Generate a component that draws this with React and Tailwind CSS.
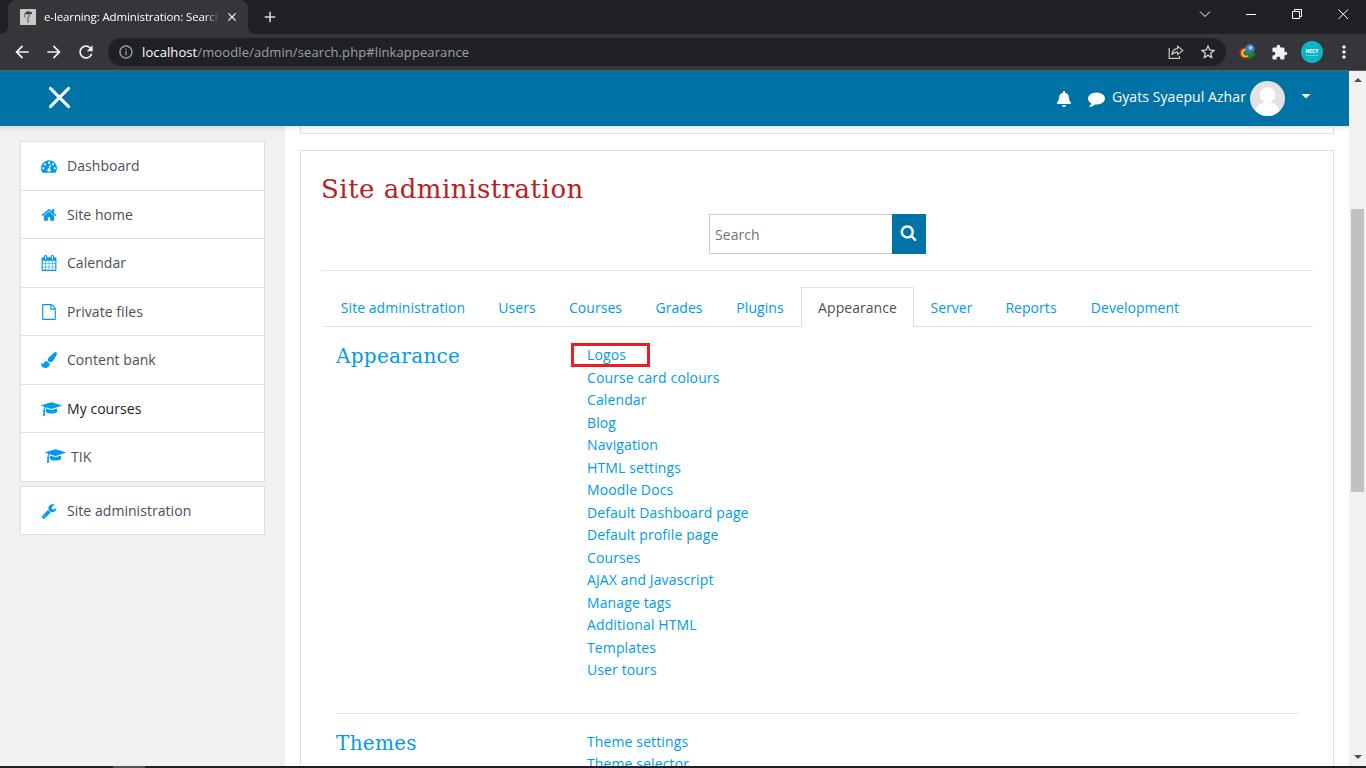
import { MdArrowBack, MdArrowForward, MdRefresh, MdInfoOutline, MdStarBorder, MdExtension, MdMoreVert, MdClose, MdAdd } from 'react-icons/md';
import { FaBell } from 'react-icons/fa';

const glyphs = {
  tachometer: 'M384 1152q0-53-37.5-90.5t-90.5-37.5-90.5 37.5-37.5 90.5 37.5 90.5 90.5 37.5 90.5-37.5 37.5-90.5zm192-448q0-53-37.5-90.5t-90.5-37.5-90.5 37.5-37.5 90.5 37.5 90.5 90.5 37.5 90.5-37.5 37.5-90.5zm428 481l101-382q6-26-7.5-48.5t-38.5-29.5-48 6.5-30 39.5l-101 382q-60 5-107 43.5t-63 98.5q-20 77 20 146t117 89 146-20 89-117q16-60-6-117t-72-91zm660-33q0-53-37.5-90.5t-90.5-37.5-90.5 37.5-37.5 90.5 37.5 90.5 90.5 37.5 90.5-37.5 37.5-90.5zm-640-640q0-53-37.5-90.5t-90.5-37.5-90.5 37.5-37.5 90.5 37.5 90.5 90.5 37.5 90.5-37.5 37.5-90.5zm448 192q0-53-37.5-90.5t-90.5-37.5-90.5 37.5-37.5 90.5 37.5 90.5 90.5 37.5 90.5-37.5 37.5-90.5zm320 448q0 261-141 483-19 29-54 29h-1402q-35 0-54-29-141-221-141-483 0-182 71-348t191-286 286-191 348-71 348 71 286 191 191 286 71 348z',
  home: 'M1472 992v480q0 26-19 45t-45 19h-384v-384h-256v384h-384q-26 0-45-19t-19-45v-480q0-1 .5-3t.5-3l575-474 575 474q1 2 1 6zm223-69l-62 74q-8 9-21 11h-3q-13 0-21-7l-692-577-692 577q-12 8-24 7-13-2-21-11l-62-74q-8-10-7-23.5t11-21.5l719-599q32-26 76-26t76 26l244 204v-195q0-14 9-23t23-9h192q14 0 23 9t9 23v408l219 182q10 8 11 21.5t-7 23.5z',
  calendar: 'M192 1664h288v-288h-288v288zm352 0h320v-288h-320v288zm-352-352h288v-320h-288v320zm352 0h320v-320h-320v320zm-352-384h288v-288h-288v288zm736 736h320v-288h-320v288zm-384-736h320v-288h-320v288zm768 736h288v-288h-288v288zm-384-352h320v-320h-320v320zm-352-864v-288q0-13-9.5-22.5t-22.5-9.5h-64q-13 0-22.5 9.5t-9.5 22.5v288q0 13 9.5 22.5t22.5 9.5h64q13 0 22.5-9.5t9.5-22.5zm736 864h288v-320h-288v320zm-384-384h320v-288h-320v288zm384 0h288v-288h-288v288zm32-480v-288q0-13-9.5-22.5t-22.5-9.5h-64q-13 0-22.5 9.5t-9.5 22.5v288q0 13 9.5 22.5t22.5 9.5h64q13 0 22.5-9.5t9.5-22.5zm384-64v1280q0 52-38 90t-90 38h-1408q-52 0-90-38t-38-90v-1280q0-52 38-90t90-38h128v-96q0-66 47-113t113-47h64q66 0 113 47t47 113v96h384v-96q0-66 47-113t113-47h64q66 0 113 47t47 113v96h128q52 0 90 38t38 90z',
  file: 'M1596 380q28 28 48 76t20 88v1152q0 40-28 68t-68 28h-1344q-40 0-68-28t-28-68v-1600q0-40 28-68t68-28h896q40 0 88 20t76 48zm-444-244v376h376q-10-29-22-41l-313-313q-12-12-41-22zm384 1528v-1024h-416q-40 0-68-28t-28-68v-416h-768v1536h1280z',
  brush: 'M1615 0q70 0 122.5 46.5t52.5 116.5q0 63-45 151-332 629-465 752-97 91-218 91-126 0-216.5-92.5t-90.5-219.5q0-128 92-212l638-579q59-54 130-54zm-909 1034q39 76 106.5 130t150.5 76l1 71q4 213-129.5 347t-348.5 134q-123 0-218-46.5t-152.5-127.5-86.5-183-29-220q7 5 41 30t62 44.5 59 36.5 46 17q41 0 55-37 25-66 57.5-112.5t69.5-76 88-47.5 103-25.5 125-10.5z',
  cap: 'M1774 836l18 316q4 69-82 128t-235 93.5-323 34.5-323-34.5-235-93.5-82-128l18-316 574 181q22 7 48 7t48-7zm530-324q0 23-22 31l-1120 352q-4 1-10 1t-10-1l-652-206q-43 34-71 111.5t-34 178.5q63 36 63 109 0 69-58 107l58 433q2 14-8 25-9 11-24 11h-192q-15 0-24-11-10-11-8-25l58-433q-58-38-58-107 0-73 65-111 11-207 98-330l-333-104q-22-8-22-31t22-31l1120-352q4-1 10-1t10 1l1120 352q22 8 22 31z',
  wrench: 'M448 1472q0-26-19-45t-45-19-45 19-19 45 19 45 45 19 45-19 19-45zm644-420l-682 682q-37 37-90 37-52 0-91-37l-106-108q-38-36-38-90 0-53 38-91l681-681q39 98 114.5 173.5t173.5 114.5zm634-435q0 39-23 106-47 134-164.5 217.5t-258.5 83.5q-185 0-316.5-131.5t-131.5-316.5 131.5-316.5 316.5-131.5q58 0 121.5 16.5t107.5 46.5q16 11 16 28t-16 28l-293 169v224l193 107q5-3 79-48.5t135.5-81 70.5-35.5q15 0 23.5 10t8.5 25z',
  search: 'M1216 832q0-185-131.5-316.5t-316.5-131.5-316.5 131.5-131.5 316.5 131.5 316.5 316.5 131.5 316.5-131.5 131.5-316.5zm512 832q0 52-38 90t-90 38q-54 0-90-38l-343-342q-179 124-399 124-143 0-273.5-55.5t-225-150-150-225-55.5-273.5 55.5-273.5 150-225 225-150 273.5-55.5 273.5 55.5 225 150 150 225 55.5 273.5q0 220-124 399l343 343q37 37 37 90z',
  comment: 'M1792 896q0 174-120 321.5t-326 233-450 85.5q-70 0-145-8-198 175-460 242-49 14-114 22-17 2-30.5-9t-17.5-29v-1q-3-4-.5-12t2-10 4.5-9.5l6-9 7-8.5 8-9q7-8 31-34.5t34.5-38 31-39.5 32.5-51 27-59 26-76q-157-89-247.5-220t-90.5-281q0-130 71-248.5t191-204.5 286-136.5 348-50.5q244 0 450 85.5t326 233 120 321.5z',
};

const navItems = [
  { label: 'Dashboard', icon: 'tachometer', height: 'h-[49px] pb-[2px]' },
  { label: 'Site home', icon: 'home', height: 'h-12' },
  { label: 'Calendar', icon: 'calendar', height: 'h-[49px] pb-[2px]' },
  { label: 'Private files', icon: 'file', height: 'h-12' },
  { label: 'Content bank', icon: 'brush', height: 'h-[49px] pb-[2px]' },
  { label: 'My courses', icon: 'cap', height: 'h-12', color: 'text-[#1d2125]' },
  { label: 'TIK', icon: 'cap', height: 'h-12 pb-[2px]', indent: true },
];

const tabs = [
  { label: 'Site administration', width: 'w-[158px]' },
  { label: 'Users', width: 'w-[70px]' },
  { label: 'Courses', width: 'w-[87px]' },
  { label: 'Grades', width: 'w-[80px]' },
  { label: 'Plugins', width: 'w-[82px]' },
  { label: 'Appearance', width: 'w-[113px]', active: true },
  { label: 'Server', width: 'w-[75px]' },
  { label: 'Reports', width: 'w-[84px]' },
  { label: 'Development', width: 'w-[124px]' },
];

const sections = [
  {
    title: 'Appearance',
    links: ['Logos', 'Course card colours', 'Calendar', 'Blog', 'Navigation', 'HTML settings', 'Moodle Docs', 'Default Dashboard page', 'Default profile page', 'Courses', 'AJAX and Javascript', 'Manage tags', 'Additional HTML', 'Templates', 'User tours'],
  },
  { title: 'Themes', links: ['Theme settings', 'Theme selector'] },
];

const Glyph = ({ name, className }) => (
  <svg viewBox={name === 'cap' ? '0 0 2304 1792' : '0 0 1792 1792'} fill="currentColor" className={className}>
    <path d={glyphs[name]} />
  </svg>
);

const TabStrip = () => (
  <div className="flex h-[34px] shrink-0 bg-[#202124] text-white">
    <svg viewBox="0 0 8 34" className="h-[34px] w-2 shrink-0"><path d="M0 34Q8 34 8 26V34Z" fill="#35363a" /></svg>
    <div className="flex w-60 items-center rounded-t-lg bg-[#35363a] pl-3">
      <svg viewBox="0 0 16 16" className="size-4 shrink-0">
        <rect width="16" height="16" rx="1" fill="#c9c9c9" />
        <path d="M4 4.5L8 2L12 3.5V5L8 5.5Z" fill="#444" />
        <path d="M5 5V8.5M9.5 6L8 9V14" stroke="#666" strokeWidth="1.2" fill="none" />
      </svg>
      <div className="ml-2 w-[175px] overflow-hidden whitespace-nowrap font-['Open_Sans','Noto_Sans',sans-serif] text-[11.5px] tracking-[-0.12px] [mask-image:linear-gradient(to_right,black_92%,transparent)]">
        e-learning: Administration: Search
      </div>
      <MdClose className="ml-[6px] size-[14px] shrink-0" />
    </div>
    <svg viewBox="0 0 8 34" className="h-[34px] w-2 shrink-0"><path d="M8 34Q0 34 0 26V34Z" fill="#35363a" /></svg>
    <div className="flex items-center pl-[5px]"><MdAdd className="size-[18px] text-[#dadce0]" /></div>
    <div className="ml-auto flex items-center gap-[30px] pb-[6px] pr-[15px]">
      <svg viewBox="0 0 16 16" className="size-4" fill="none" stroke="#fff"><path d="M3 5.5L8 10.5L13 5.5" /></svg>
      <svg viewBox="0 0 16 16" className="size-4" fill="none" stroke="#fff"><path d="M3 8.5H13" /></svg>
      <svg viewBox="0 0 16 16" className="size-4" fill="none" stroke="#fff"><path d="M3.5 5.5H10.5V12.5H3.5ZM5.5 5.5V3.5H12.5V10.5H10.5" /></svg>
      <svg viewBox="0 0 16 16" className="size-4" fill="none" stroke="#fff"><path d="M3.5 3.5L13 13M13 3.5L3.5 13" /></svg>
    </div>
  </div>
);

const Toolbar = () => (
  <div className="flex h-[37px] shrink-0 items-center border-b border-[#5c5d61] bg-[#35363a] pl-3 text-[#f1f3f4]">
    <MdArrowBack className="size-5" />
    <MdArrowForward className="ml-3 size-5" />
    <MdRefresh className="ml-3 size-5" />
    <div className="ml-3 flex h-7 w-[1118px] items-center rounded-full bg-[#202124] pl-[10px] pr-[9px]">
      <MdInfoOutline className="size-4 text-[#9aa0a6]" />
      <div className="ml-2 pt-px font-['Open_Sans','Noto_Sans',sans-serif] text-[13px] tracking-[0.1px] text-[#9aa0a6]">
        <span className="text-white">localhost</span>/moodle/admin/search.php#linkappearance
      </div>
      <svg viewBox="0 0 16 16" className="ml-auto size-4" fill="none" stroke="#c4c7c5" strokeWidth="1.2">
        <path d="M1.2 4V14.4H11.5V12" />
        <path d="M9.6 2.2L14.8 6.4L9.6 10.6V8.2Q5.5 8 3.8 11Q4.5 5 9.6 4.7Z" />
      </svg>
      <MdStarBorder className="ml-[15px] size-[18px] text-[#dadce0]" />
    </div>
    <svg viewBox="0 0 18 16" className="ml-[13px] h-4 w-[18px]">
      <circle cx="6" cy="9" r="5.5" fill="#d93025" />
      <circle cx="6.5" cy="9" r="4.2" fill="#f4d21f" />
      <circle cx="7" cy="9" r="2.8" fill="#2b8a3e" />
      <circle cx="11" cy="5" r="4.8" fill="#3c78c8" />
      <circle cx="11.5" cy="3.8" r="2" fill="#a9cdf2" />
      <path d="M7 8.5L11 10V7.5L17 10L10 15.5L9.5 12.5Z" fill="#158a1d" />
    </svg>
    <MdExtension className="ml-[14px] size-[17px]" />
    <div className="ml-[13px] flex size-[22px] flex-col items-center justify-center rounded-full bg-[#0cb5c2] font-['Roboto',sans-serif] text-[5px] font-bold leading-none text-white">
      NECY
      <div className="mt-px h-px w-3 bg-[#5fd0d8]" />
    </div>
    <MdMoreVert className="ml-[11px] size-5" />
  </div>
);

const Header = () => (
  <header className="relative z-10 flex h-[55px] w-[1349px] shrink-0 items-center bg-[#0073a6] pl-12 pr-[38px] text-white shadow-[0_2px_5px_rgba(0,0,0,0.12)]">
    <svg viewBox="0 0 22 22" className="mb-[2px] size-[23px]" stroke="currentColor" strokeWidth="2.8" strokeLinecap="round">
      <path d="M2.3 2.3L19.7 19.7M19.7 2.3L2.3 19.7" />
    </svg>
    <FaBell className="ml-auto h-4 w-4" />
    <Glyph name="comment" className="ml-4 size-[17px]" />
    <span className="ml-[7px] w-[135px] whitespace-nowrap pb-1 text-[14px] tracking-[0.08px]">Gyats Syaepul Azhar</span>
    <svg viewBox="0 0 35 35" className="ml-[3px] size-[35px] rounded-full bg-[#e3e3e3]" fill="#fff">
      <circle cx="17.5" cy="14" r="7.7" />
      <ellipse cx="17.5" cy="32" rx="12.5" ry="11" />
    </svg>
    <svg viewBox="0 0 10 5" className="mb-1 ml-4 h-[5px] w-[10px]" fill="#fff"><path d="M0.5 0H9.5L5 4.6Z" /></svg>
  </header>
);

const NavItem = ({ label, icon, height, color = 'text-[#495057]', indent }) => (
  <a className={`flex items-center whitespace-nowrap ${height} ${color} ${indent ? 'pl-6' : 'pl-5'}`}>
    <Glyph name={icon} className={icon === 'cap' ? 'h-4 w-[21px] text-[#009bea]' : 'mt-px h-4 w-4 text-[#009bea]'} />
    <span className={icon === 'cap' ? 'ml-[5px]' : 'ml-[10px]'}>{label}</span>
  </a>
);

const Sidebar = () => (
  <aside className="w-[285px] shrink-0 bg-[#f1f1f1] pl-5 pt-[15px]">
    <nav className="w-[245px] divide-y divide-[#dedede] border border-[#dedede] bg-white">
      {navItems.map(item => <NavItem key={item.label} {...item} />)}
    </nav>
    <nav className="mt-1 w-[245px] border border-[#dedede] bg-white">
      <NavItem label="Site administration" icon="wrench" height="h-[47px]" />
    </nav>
  </aside>
);

const Section = ({ title, links }) => (
  <section className="flex">
    <h3 className="w-[251px] shrink-0 font-['DejaVu_Serif',serif] text-[20px] leading-[25px] tracking-[0.3px] text-[#009bea]">{title}</h3>
    <ul className="tracking-[0.12px]">
      {links.map(link => (
        <li key={link} className="relative h-[22.5px] whitespace-nowrap leading-[22.5px] text-[#009bea]">
          {link}
          {link === 'Logos' && <span className="absolute -left-4 -top-px h-6 w-[79px] border-[3px] border-[#ed1c24]" />}
        </li>
      ))}
    </ul>
  </section>
);

const Content = () => (
  <main className="w-[1064px] shrink-0 bg-white pl-[15px]">
    <div className="h-2 w-[1034px] border border-t-0 border-[#dedede]" />
    <div className="mt-4 h-[700px] w-[1034px] border border-[#dedede] px-5 pt-[21px]">
      <h2 className="h-[42px] whitespace-nowrap font-['DejaVu_Serif',serif] text-[26px] leading-[34px] tracking-[0.5px] text-[#b92024]">Site administration</h2>
      <div className="ml-[388px] flex h-10">
        <div className="flex w-[183px] items-center border border-r-0 border-[#c8cace] pl-[5px] text-[#6c757d]">Search</div>
        <button className="flex w-[34px] justify-center bg-[#0073a6] pr-px pt-[10px] text-white">
          <Glyph name="search" className="size-[17px]" />
        </button>
      </div>
      <hr className="mt-4 border-[#e4e5e7]" />
      <div className="ml-[3px] mt-4 flex h-10 border-b border-[#dee2e6]">
        {tabs.map(tab => (
          <div key={tab.label} className={`flex items-center justify-center whitespace-nowrap border border-b-0 ${tab.width} ${tab.active ? 'h-10 border-[#dee2e6] bg-white pb-px text-[#495057]' : 'h-[39px] border-transparent pt-px text-[#009bea]'}`}>
            {tab.label}
          </div>
        ))}
      </div>
      <div className="px-[15px] pt-[17px]">
        <Section {...sections[0]} />
        <hr className="mb-[17px] mt-[31px] border-[#e4e5e7]" />
        <Section {...sections[1]} />
      </div>
    </div>
  </main>
);

const Scrollbar = () => (
  <div className="flex w-[17px] shrink-0 flex-col items-center bg-[#f1f1f1] pt-[7px]">
    <svg viewBox="0 0 8 4" className="h-1 w-2" fill="#505050"><path d="M0 4L4 0L8 4Z" /></svg>
    <div className="mt-[127px] h-[283px] w-[13px] bg-[#c1c1c1]" />
    <svg viewBox="0 0 8 4" className="mb-[7px] mt-auto h-1 w-2" fill="#505050"><path d="M0 0L4 4L8 0Z" /></svg>
  </div>
);

const App = () => (
  <div className="flex h-[768px] w-[1366px] flex-col overflow-hidden bg-white font-['Open_Sans','Noto_Sans',sans-serif] text-[14px]">
    <TabStrip />
    <Toolbar />
    <div className="flex h-[695px] shrink-0 overflow-hidden tracking-[0.05px]">
      <div className="flex w-[1349px] flex-col overflow-hidden">
        <Header />
        <div className="flex min-h-0 flex-1 overflow-hidden">
          <Sidebar />
          <Content />
        </div>
      </div>
      <Scrollbar />
    </div>
    <div className="flex h-0.5 shrink-0 bg-[#202124] pl-[113px]">
      <div className="w-8 bg-[#555]" />
    </div>
  </div>
);

export default App;
